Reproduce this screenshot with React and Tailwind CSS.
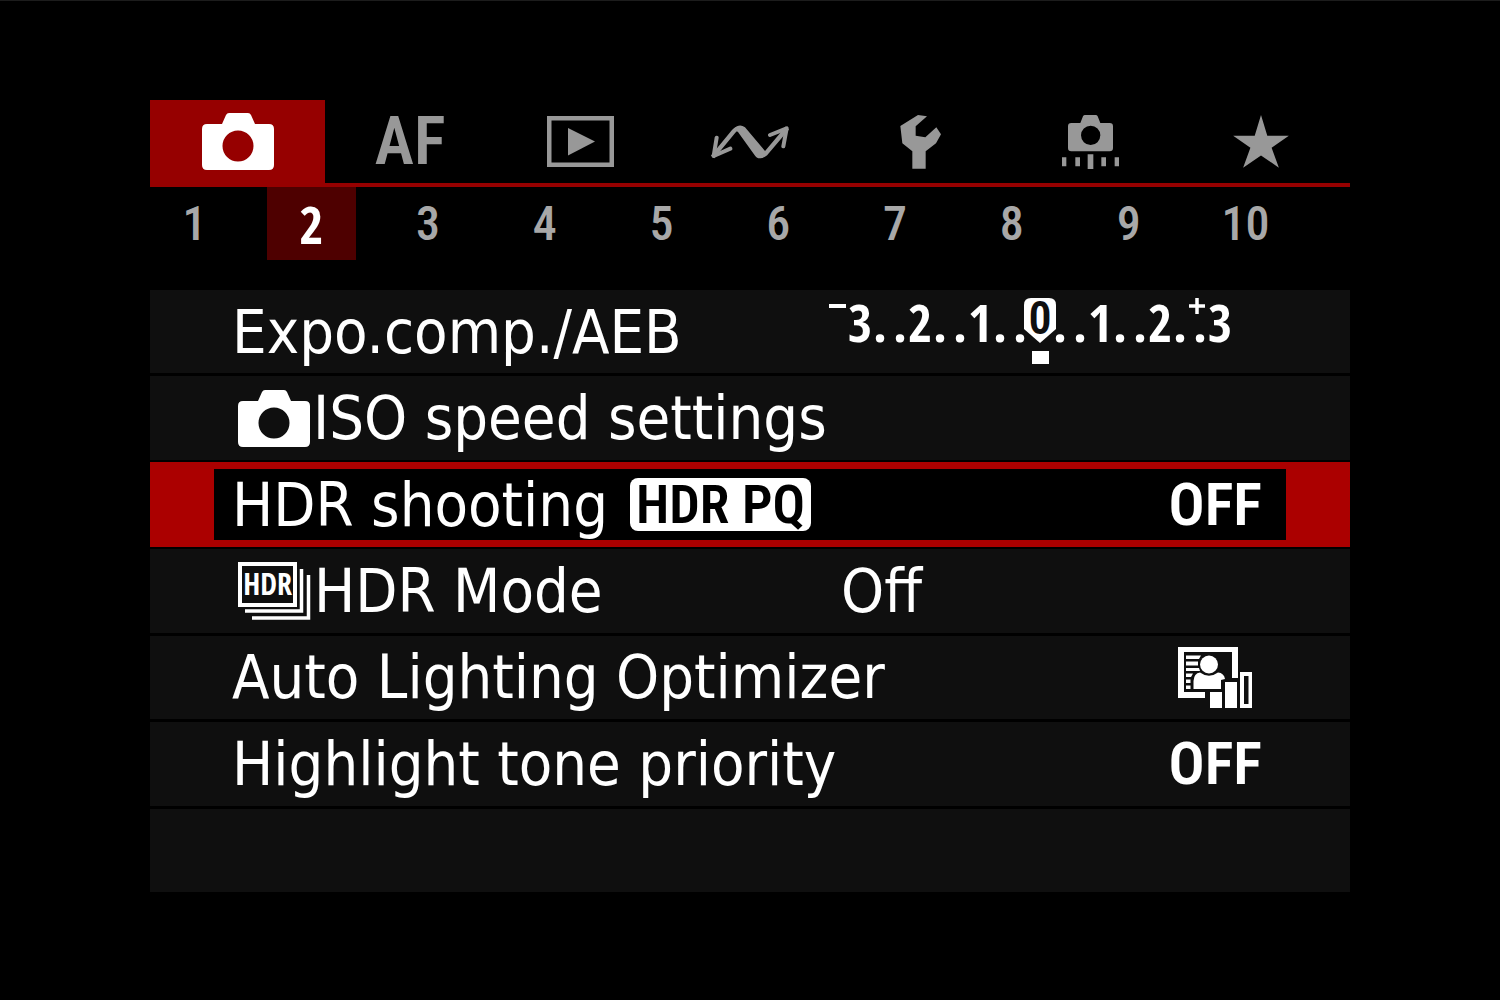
const CameraIcon = ({ className }) => (
  <svg viewBox="0 0 72 57" className={className} aria-hidden="true">
    <path
      fill="currentColor"
      fillRule="evenodd"
      d="M27 0H46Q48 0 49 2L53 11H67Q72 11 72 16V52Q72 57 67 57H5Q0 57 0 52V16Q0 11 5 11H20L24 2Q25 0 27 0ZM36 17.500A15.500 15.500 0 1 0 36 48.500A15.500 15.500 0 1 0 36 17.500Z"
    />
  </svg>
);

const PlayIcon = () => (
  <svg viewBox="0 0 67 51" className="h-[51px] w-[67px]" aria-hidden="true">
    <rect x="2.250" y="2.250" width="62.500" height="46.500" fill="none" stroke="currentColor" strokeWidth="4.500" />
    <path d="M21 12L48 25.500L21 39.500Z" fill="currentColor" />
  </svg>
);

const TransferIcon = () => (
  <svg viewBox="544 84 234 105" className="h-[35px] w-[78px]" aria-hidden="true">
    <path
      d="M549 183L612 106Q627 88 642 106L681 166Q692 188 708 173L773 96"
      fill="none"
      stroke="currentColor"
      strokeWidth="13"
      strokeLinejoin="round"
    />
    <path d="M612 100Q628 80 646 94L706 165Q710 180 697 186Q682 190 674 176L625 108Z" fill="currentColor" />
    <path
      d="M561 125L552 180L602 158M721 117L771 97L761 151"
      fill="none"
      stroke="currentColor"
      strokeWidth="12"
      strokeLinecap="round"
      strokeLinejoin="round"
    />
  </svg>
);

const WrenchIcon = () => (
  <svg viewBox="59 57 123 162" className="h-[54px] w-[41px]" aria-hidden="true">
    <path
      fill="currentColor"
      d="M60 90L113 57L140 61L106 91V119L135 124L168 94L182 115L167 142L136 166V218H96V166L66 142Z"
    />
  </svg>
);

const CustomIcon = () => (
  <svg viewBox="543 56 171 162" className="h-[54px] w-[57px]" aria-hidden="true">
    <path
      fill="currentColor"
      fillRule="evenodd"
      d="M612 56H644Q648 56 650 60L658 80H686Q696 80 696 90V155Q696 165 686 165H571Q561 165 561 155V90Q561 80 571 80H598L606 60Q608 56 612 56ZM629 88A29 29 0 1 0 629 146A29 29 0 1 0 629 88Z"
    />
    <path fill="currentColor" d="M543 183h13v27h-13zM583 183h14v27h-14zM620 174h17v44h-17zM661 183h14v27h-14zM701 183h13v27h-13z" />
  </svg>
);

const StarIcon = () => (
  <svg viewBox="1064 58 168 160" className="h-[53px] w-[56px]" aria-hidden="true">
    <path
      fill="currentColor"
      d="M1148 58L1167 121H1232L1180 157L1202 217L1148 180L1094 217L1116 157L1064 121H1129Z"
    />
  </svg>
);

const HdrStackIcon = () => (
  <svg viewBox="0 0 73 58" className="h-[58px] w-[73px]" aria-hidden="true">
    <rect x="2" y="2" width="55" height="41" fill="none" stroke="currentColor" strokeWidth="4" />
    <path d="M63.500 7V49H7M70.500 13V56H14" fill="none" stroke="currentColor" strokeWidth="3.500" />
    <text x="29.500" y="33" textAnchor="middle" fill="currentColor" className="font-['Open_Sans_Condensed',sans-serif] text-[30px] font-bold">
      HDR
    </text>
  </svg>
);

const LightingIcon = () => (
  <svg viewBox="0 0 74 61" className="h-[61px] w-[74px]" role="img" aria-label="Standard">
    <g fill="currentColor">
      <path d="M0 0H60V31H54V5H6V45H27V51H0Z" />
      <path d="M8 8.500H23L21 12H8ZM8 14.500H20V18.500H8ZM8 21H21L22 24H8ZM8 26.500H15L13 30H8ZM8 32.500H12.500V36H8ZM8 38.500H12.500V42H8Z" />
      <circle cx="31" cy="17.500" r="9" />
      <path d="M15.500 42V34Q16 26 22 25.500Q31 32 40 25.500Q46 26 47 32L43 33V42Z" />
      <path d="M32 45H44V61H32ZM47 35H59V61H47Z" />
      <path fillRule="evenodd" d="M62 25H74V61H62ZM66 29V57H70.500V29Z" />
    </g>
  </svg>
);

const tabs = [
  { name: "Autofocus", icon: <span className="font-['Roboto_Condensed',sans-serif] text-[66px] leading-none font-semibold">AF</span> },
  { name: "Playback", icon: <PlayIcon /> },
  { name: "Communication", icon: <TransferIcon /> },
  { name: "Set-up", icon: <WrenchIcon /> },
  { name: "Custom functions", icon: <CustomIcon /> },
  { name: "My Menu", icon: <StarIcon /> },
];

const pages = [1, 2, 3, 4, 5, 6, 7, 8, 9, 10];

const scale = "3..2..1..0..1..2..3".split("");

const ExposureScale = () => (
  <span className="mr-[120px] grid shrink-0 grid-cols-[repeat(19,20px)] self-start font-['Open_Sans_Condensed',sans-serif] text-[52px] leading-[64px] font-bold">
    {scale.map((mark, i) => (
      <span key={i} className="relative flex justify-center">
        {i === 0 && <span className="absolute top-[14px] -left-[21px] h-[4px] w-[17px] bg-white" />}
        {i === 18 && (
          <svg viewBox="0 0 16 16" className="absolute top-[8px] -left-[21px] size-[16px]" aria-label="plus">
            <path d="M8 0V16M0 8H16" stroke="white" strokeWidth="3.500" />
          </svg>
        )}
        {i === 9 && (
          <>
            <svg viewBox="0 0 32 45" className="absolute top-[8px] -left-[6px] h-[45px] w-[32px]" aria-hidden="true">
              <path d="M7 0H25Q32 0 32 7V31L16 45L0 31V7Q0 0 7 0Z" fill="white" />
            </svg>
            <span className="absolute top-[61px] left-[2px] h-[13px] w-[17px] bg-white" />
          </>
        )}
        <span className={i === 9 ? "relative font-['Roboto_Condensed',sans-serif] text-[46px] leading-[56px] font-semibold text-[#0f0f0f]" : ""}>
          {mark}
        </span>
      </span>
    ))}
  </span>
);

const Off = () => <span className="ml-auto font-['Roboto_Condensed',sans-serif] text-[60px] leading-none font-semibold">OFF</span>;

const rowClass = "flex h-full w-full items-center bg-[#0f0f0f] pl-[82px] text-left whitespace-nowrap";

export default function App() {
  return (
    <main className="min-h-screen border-t border-[#1c1c1c] bg-black pt-[99px] pb-[108px] font-['DejaVu_Sans_Condensed','DejaVu_Sans',sans-serif] text-white">
      <div className="mx-auto w-4/5">
        <nav aria-label="Menu tabs" className="flex h-[87px] border-b-4 border-[#960000] pr-[4px] text-[#989898]">
          <button aria-label="Shooting" className="flex w-[175px] items-center justify-center bg-[#960000] text-white">
            <CameraIcon className="h-[57px] w-[72px]" />
          </button>
          {tabs.map((tab) => (
            <button key={tab.name} aria-label={tab.name} className="flex flex-1 items-center justify-center">
              {tab.icon}
            </button>
          ))}
        </nav>

        <nav aria-label="Pages" className="flex justify-between pr-[60px]">
          {pages.map((page) => (
            <button
              key={page}
              className={
                page === 2
                  ? "h-[73px] w-[89px] bg-[#4e0000] font-['Open_Sans_Condensed',sans-serif] text-[52px] leading-none font-bold text-white"
                  : "h-[73px] w-[89px] font-['Roboto_Condensed',sans-serif] text-[48px] leading-none font-medium text-[#a8a8a8]"
              }
            >
              {page}
            </button>
          ))}
        </nav>

        <ul className="mt-[30px] grid min-h-[602px] auto-rows-fr gap-[3px] text-[61px] leading-[70px]">
          <li>
            <button className={rowClass}>
              <span className="mr-auto">Expo.comp./AEB</span>
              <ExposureScale />
            </button>
          </li>
          <li>
            <button className={rowClass}>
              <CameraIcon className="mr-[3px] ml-[6px] h-[57px] w-[72px]" />
              <span>ISO speed settings</span>
            </button>
          </li>
          <li className="-my-px">
            <button className="flex h-full w-full bg-[#ab0000] px-[64px] py-[7px] text-left whitespace-nowrap">
              <span className="flex w-full items-center bg-black pr-[24px] pl-[18px]">
                <span>HDR shooting</span>
                <span className="ml-[22px] rounded-lg bg-white px-[6px] font-['Roboto_Condensed',sans-serif] text-[54px] leading-[53px] font-semibold text-black">
                  HDR PQ
                </span>
                <Off />
              </span>
            </button>
          </li>
          <li>
            <button className={rowClass}>
              <span className="flex min-w-[609px] items-center">
                <span className="mr-[3px] ml-[6px]">
                  <HdrStackIcon />
                </span>
                HDR Mode
              </span>
              <span>Off</span>
            </button>
          </li>
          <li>
            <button className={rowClass}>
              <span className="mr-auto">Auto Lighting Optimizer</span>
              <span className="mr-[98px]">
                <LightingIcon />
              </span>
            </button>
          </li>
          <li>
            <button className="flex h-full w-full items-center bg-[#0f0f0f] pr-[88px] pl-[82px] text-left whitespace-nowrap">
              <span>Highlight tone priority</span>
              <Off />
            </button>
          </li>
          <li className="bg-[#0f0f0f]" />
        </ul>
      </div>
    </main>
  );
}
